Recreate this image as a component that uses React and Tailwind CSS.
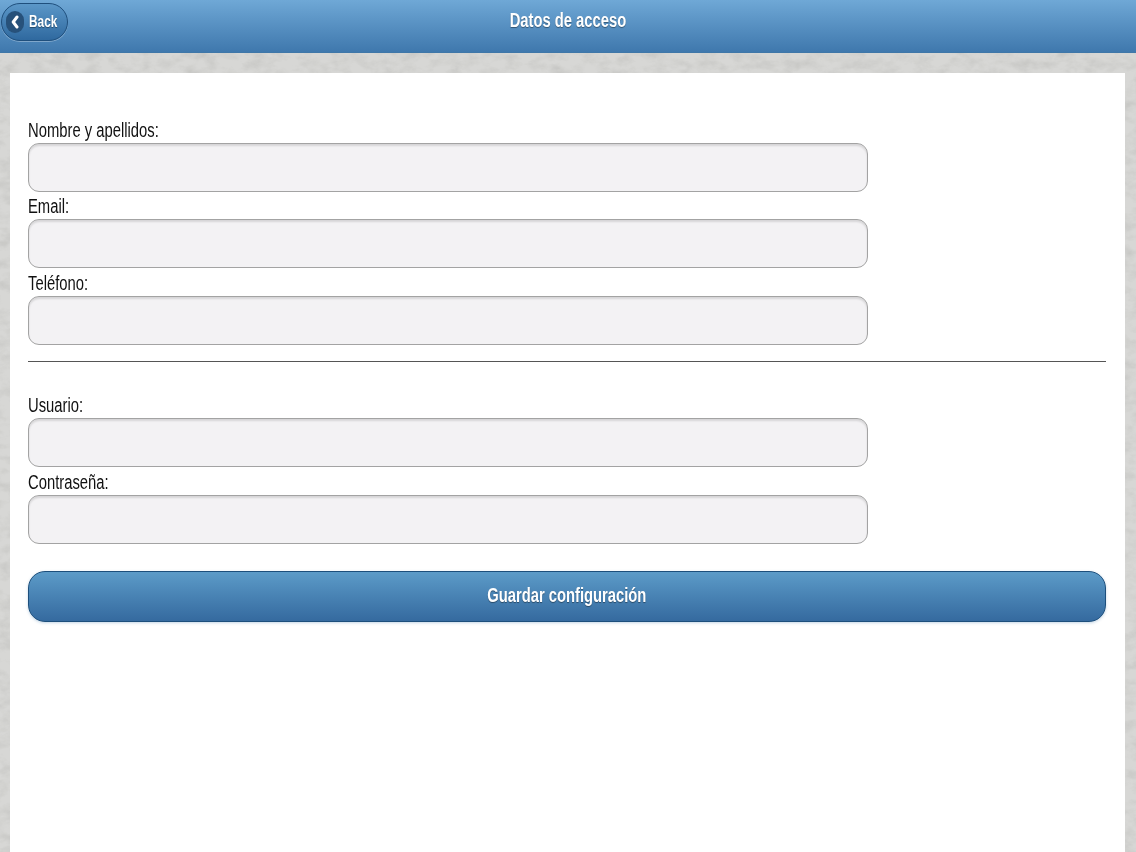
const font = { fontFamily: '"Liberation Sans", Arial, sans-serif' };

function Field({ label }) {
  return (
    <label className="block">
      <span className="flex h-[27.5px] items-center pt-[2px]">
        <span className="origin-left scale-x-[0.74] whitespace-nowrap text-[20px] leading-none text-[#111]">{label}</span>
      </span>
      <input
        type="text"
        className="block h-[49px] w-[840px] rounded-[11px] border border-[#a3a3a3] bg-[#f3f2f4] shadow-[inset_0_2px_2px_rgba(0,0,0,0.12)] outline-none"
      />
    </label>
  );
}

function Texture() {
  return (
    <svg className="absolute inset-0 h-full w-full" aria-hidden="true">
      <filter id="stone" x="0" y="0" width="100%" height="100%">
        <feTurbulence type="fractalNoise" baseFrequency="0.06 0.1" numOctaves="4" seed="7" />
        <feColorMatrix type="matrix" values="0 0 0 0 0.45  0 0 0 0 0.45  0 0 0 0 0.43  1.5 1.5 0 0 -1.3" />
      </filter>
      <rect width="100%" height="100%" fill="#d7d7d5" />
      <rect width="100%" height="100%" filter="url(#stone)" opacity="0.4" />
    </svg>
  );
}

export default function App() {
  return (
    <div className="relative h-[852px] w-full overflow-hidden bg-[#d7d7d5]" style={font}>
      <Texture />
      <div className="relative flex h-full flex-col">
        <header className="relative flex h-[53px] shrink-0 items-center justify-center border-b border-[#3f77a8] bg-gradient-to-b from-[#6fa8d6] to-[#3f78ad]">
          <button className="absolute left-[1px] top-[3px] flex h-[38px] w-[67px] items-center rounded-[19px] border border-[#1f4f7d] bg-gradient-to-b from-[#5b97c8] to-[#2f699f] shadow-[0_1px_0_rgba(255,255,255,0.3)]">
            <span className="ml-[4px] flex h-[22px] w-[18px] shrink-0 items-center justify-center rounded-full bg-[#27517a]">
              <svg width="10" height="14" viewBox="0 0 10 14" fill="none">
                <path d="M7 2 L3.2 7 L7 12" stroke="#fff" strokeWidth="3" strokeLinecap="round" strokeLinejoin="round" />
              </svg>
            </span>
            <span className="ml-[5px] shrink-0 origin-left scale-x-[0.74] text-[16px] font-bold text-white [text-shadow:0_1px_1px_rgba(0,0,0,0.4)]">Back</span>
          </button>
          <h1 className="-mt-[12px] scale-x-[0.738] whitespace-nowrap text-[20px] font-bold text-white [text-shadow:0_1px_1px_rgba(0,0,0,0.4)]">Datos de acceso</h1>
        </header>
        <main className="ml-[10px] mr-[11px] mt-[20px] flex-1 bg-white pl-[18px] pr-[19.5px] pt-[42px]">
          <Field label="Nombre y apellidos:" />
          <Field label="Email:" />
          <Field label="Teléfono:" />
          <hr className="mt-[16px] border-t border-[#555]" />
          <div className="mt-[29px]">
            <Field label="Usuario:" />
            <Field label="Contraseña:" />
          </div>
          <button className="mt-[27.5px] flex h-[51px] w-full items-center justify-center rounded-[17px] border border-[#1d4f7c] bg-gradient-to-b from-[#5c9bc8] to-[#356a9f] shadow-[0_1px_3px_rgba(60,120,170,0.3)]">
            <span className="-mt-[4px] scale-x-[0.738] whitespace-nowrap text-[20px] font-bold text-white [text-shadow:0_1px_1px_rgba(0,0,0,0.4)]">Guardar configuración</span>
          </button>
        </main>
      </div>
    </div>
  );
}
